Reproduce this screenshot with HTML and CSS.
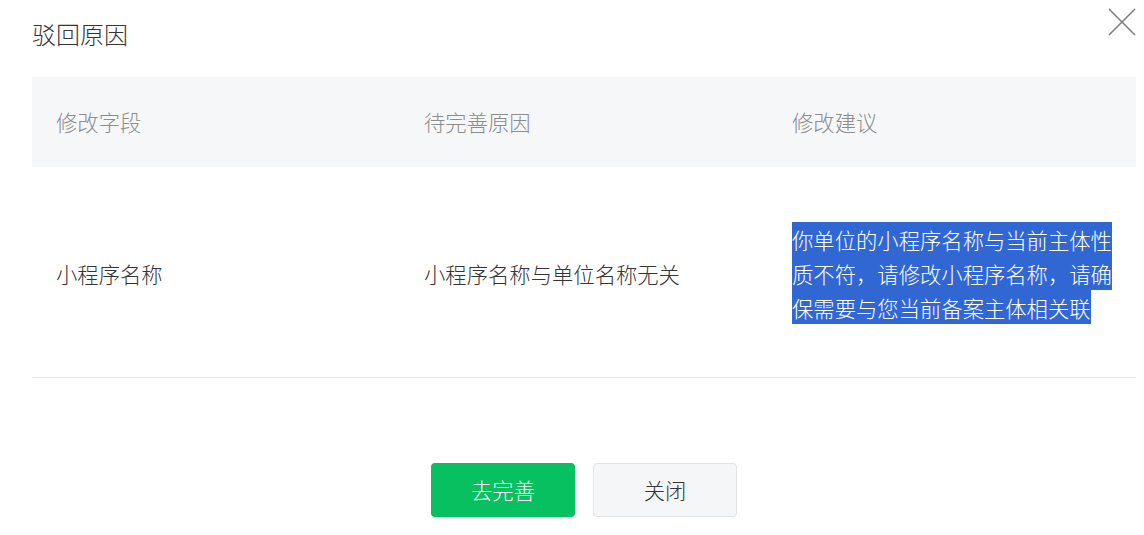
FILE: index.html
```html
<!DOCTYPE html>
<html lang="zh-CN">
<head>
<meta charset="utf-8">
<title>驳回原因</title>
<link rel="stylesheet" href="styles.css">
</head>
<body>
<div class="dialog">
  <button class="close" aria-label="关闭">
    <svg width="28" height="28" viewBox="0 0 28 28"><path d="M1 1 L27 27 M27 1 L1 27" stroke="#7f7f7f" stroke-width="1.6" fill="none"/></svg>
  </button>
  <h1 class="title">驳回原因</h1>
  <div class="table">
    <div class="th">修改字段</div>
    <div class="th">待完善原因</div>
    <div class="th">修改建议</div>
    <div class="td">小程序名称</div>
    <div class="td">小程序名称与单位名称无关</div>
    <div class="td td-wrap"><span class="sel">你单位的小程序名称与当前主体性质不符，请修改小程序名称，请确保需要与您当前备案主体相关联</span></div>
  </div>
  <div class="actions">
    <button class="btn btn-primary">去完善</button>
    <button class="btn btn-default">关闭</button>
  </div>
</div>
</body>
</html>
```
FILE: styles.css
```css
html, body {
  margin: 0;
  padding: 0;
  background: #fff;
}
body {
  font-family: "Noto Sans CJK SC", "Noto Sans", sans-serif;
  font-weight: 300;
  color: #353535;
}
.dialog {
  position: relative;
  padding: 18px 8px 0 32px;
}
.close {
  position: absolute;
  left: 1108px;
  top: 8px;
  width: 28px;
  height: 28px;
  padding: 0;
  border: 0;
  background: none;
  display: flex;
}
.title {
  margin: 0 0 27px;
  font-size: 24px;
  font-weight: 300;
  line-height: 32px;
  color: #353535;
}
.table {
  display: grid;
  grid-template-columns: 368px 368px 368px;
}
.th {
  background: #f6f7f9;
  color: #8c8c8c;
  font-size: 21.33px;
  line-height: 34px;
  padding: 28px 24px;
}
.td {
  font-size: 21.33px;
  line-height: 33.6px;
  padding: 56px 24px 53px;
  border-bottom: 1px solid #e7e7e7;
  display: flex;
  align-items: center;
}
.td-wrap {
  display: block;
  padding-right: 20px;
}
.sel {
  background: #3167d3;
  color: #fff;
  padding: 1.6px 0;
}
.actions {
  display: flex;
  justify-content: center;
  gap: 18px;
  margin-top: 85px;
}
.btn {
  width: 144px;
  height: 54px;
  border-radius: 4px;
  font-family: inherit;
  font-weight: 300;
  font-size: 21.33px;
  padding: 0;
  cursor: pointer;
}
.btn-primary {
  background: #07c160;
  border: 0;
  color: #fff;
}
.btn-default {
  background: #f5f6f7;
  border: 1px solid #e2e3e5;
  color: #353535;
}
```
